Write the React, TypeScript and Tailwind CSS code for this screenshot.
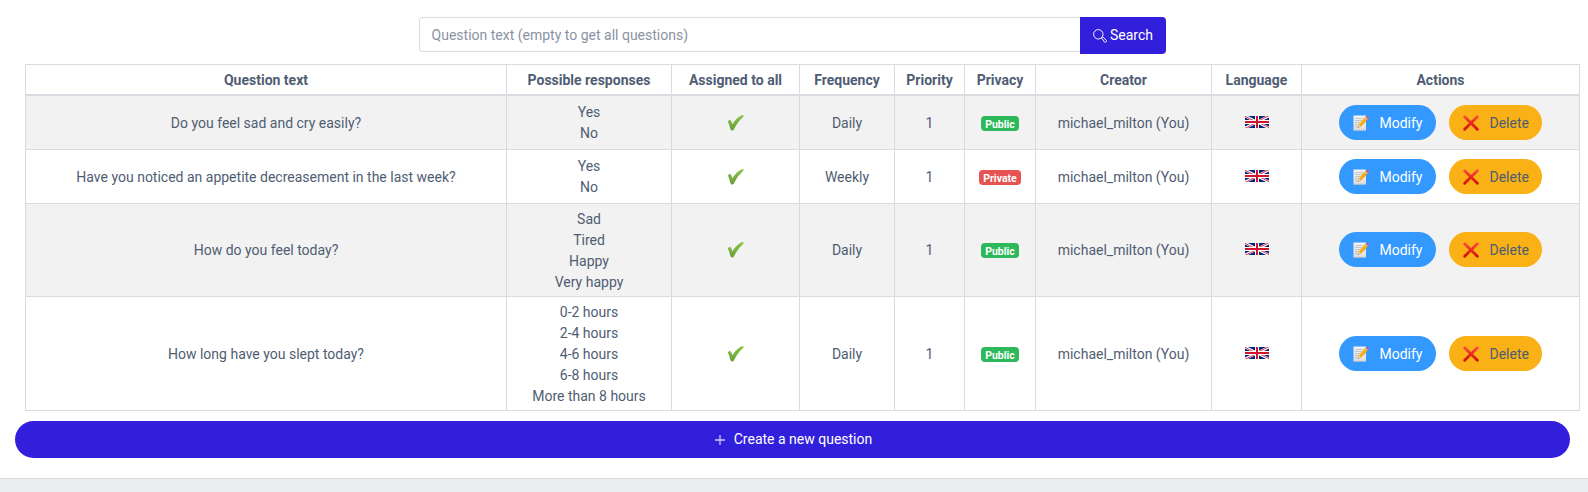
import React from "react";

type Question = {
  text: string;
  responses: string[];
  frequency: string;
  privacy: "Public" | "Private";
  height: string;
  lift: string;
};

const questions: Question[] = [
  { text: "Do you feel sad and cry easily?", responses: ["Yes", "No"], frequency: "Daily", privacy: "Public", height: "h-[55px] [&>td]:pt-[3px]", lift: "-mt-[2px]" },
  { text: "Have you noticed an appetite decreasement in the last week?", responses: ["Yes", "No"], frequency: "Weekly", privacy: "Private", height: "h-[54px] [&>td]:pt-[2px]", lift: "-mt-[2px]" },
  { text: "How do you feel today?", responses: ["Sad", "Tired", "Happy", "Very happy"], frequency: "Daily", privacy: "Public", height: "h-[93px] [&>td]:pt-[1px]", lift: "mt-0" },
  { text: "How long have you slept today?", responses: ["0-2 hours", "2-4 hours", "4-6 hours", "6-8 hours", "More than 8 hours"], frequency: "Daily", privacy: "Public", height: "h-[114px] [&>td]:pt-[2px]", lift: "mt-0" },
];

const headers = ["Question text", "Possible responses", "Assigned to all", "Frequency", "Priority", "Privacy", "Creator", "Language", "Actions"];

function Flag() {
  return (
    <svg className="mx-auto -mt-[3px] block h-3 w-6" viewBox="0 0 60 30" preserveAspectRatio="none">
      <path fill="#00247d" d="M0 0h60v30H0z" />
      <path stroke="#fff" strokeWidth="6.5" d="M0 0l60 30M60 0L0 30" />
      <path stroke="#cf142b" strokeWidth="2.2" d="M0 1l30 15M30 14l30 15M60 -1L30 14M30 16L0 31" />
      <path stroke="#fff" strokeWidth="10" d="M30 0v30M0 15h60" />
      <path stroke="#cf142b" strokeWidth="5" d="M30 0v30M0 15h60" />
    </svg>
  );
}

function CheckIcon() {
  return (
    <svg className="mx-auto -mt-[2px] block h-4 w-4" viewBox="0 0 16 16">
      <defs>
        <linearGradient id="check" x1="0" y1="0" x2="0" y2="1">
          <stop offset="0" stopColor="#8bc34a" />
          <stop offset="1" stopColor="#689f38" />
        </linearGradient>
      </defs>
      <path
        fill="url(#check)"
        d="M.2 6.100C.9 5 1.900 4.700 2.600 5.300c.8.8 1.200 2.300 1.700 4C6.600 5.600 9.500 2.600 12.900.7c.9-.5 2.400-.6 2.800-.2.3.4-.5 1.300-1.200 2C11.300 5.500 8.500 9.200 6.400 13.500c-.6 1.500-1.200 2-2.300 2-1.300 0-1.500-.7-2.100-2.700C1.400 10.700 1.100 9 .3 7.500c-.3-.5-.4-.9-.1-1.400z"
      />
    </svg>
  );
}

function CrossIcon() {
  return (
    <svg className="block h-4 w-4" viewBox="0 0 16 16">
      <defs>
        <linearGradient id="cross" x1="0" y1="0" x2="0" y2="16" gradientUnits="userSpaceOnUse">
          <stop offset="0" stopColor="#ff5047" />
          <stop offset="0.5" stopColor="#ea2a20" />
          <stop offset="1" stopColor="#cc0c0c" />
        </linearGradient>
      </defs>
      <path fill="none" stroke="url(#cross)" strokeWidth="2.800" strokeLinecap="round" d="M1.700 1.800l12.600 12.400M14.300 1.800L1.700 14.200" />
    </svg>
  );
}

function MemoIcon() {
  return (
    <svg className="block h-4 w-4" viewBox="0 0 16 16">
      <defs>
        <linearGradient id="paper" x1="0" y1="0" x2="0" y2="1">
          <stop offset="0" stopColor="#f3f3f3" />
          <stop offset="1" stopColor="#dedede" />
        </linearGradient>
      </defs>
      <path fill="url(#paper)" d="M.5.5h12.500v15H.5z" />
      <path fill="none" stroke="#b9bec2" strokeWidth="0.800" d="M2 3.500h8M2 5.500h7M2 7.500h5.500M2 9.500h4M2 11.500h3.500M.5 15.200H13" />
      <path fill="#f9b115" d="M11.800 2.200l2.500 2.300-6.700 7-2.600 1.100.8-3z" />
      <path fill="none" stroke="#d58a11" strokeWidth="0.700" d="M14 4.800l-6.500 6.700" />
      <path fill="#f1d2a0" d="M5.700 9.600l2 2-2.900 1.200z" />
      <path fill="#444" d="M5.100 11.800l.8.700-1.300.6z" />
      <path fill="#c5cdd2" d="M11.500 2.500l1-1 2.500 2.300-1 1z" />
      <path fill="#ed5565" d="M12.400 1.600c.7-.8 1.400-.8 2.200-.1l.6.600c.8.800.7 1.200-.2 2.100z" />
    </svg>
  );
}

function SearchIcon() {
  return (
    <svg className="h-[14px] w-[14px]" viewBox="0 0 14 14" fill="none" stroke="#fff" strokeWidth="1" strokeOpacity="0.95">
      <circle cx="5.300" cy="5.300" r="4.700" />
      <path d="M8.500 8.900l1.200-1.100 3.600 3.500a1 1 0 0 1 0 1.300l-.5.5a1 1 0 0 1-1.300 0z" />
    </svg>
  );
}

function PlusIcon() {
  return (
    <svg className="h-[10px] w-[10px]" viewBox="0 0 10 10" fill="none" stroke="#d0ccf7" strokeWidth="1.300">
      <path d="M5 0v10M0 5h10" />
    </svg>
  );
}

export default function App() {
  return (
    <div className="h-[492px] overflow-hidden bg-[#ebedef] font-['Roboto',sans-serif] text-[14px] leading-[21px] text-[#4f5d73]">
      <main className="h-[479px] border-b border-[#d8dbe0] bg-white pt-[17px]">
        <div className="ml-[419px] flex h-[37px] w-[747px] items-start">
          <input
            className="h-[35px] w-[661px] rounded-l-[4px] border border-r-0 border-[#d8dbe0] bg-white pr-3 pl-[11.600px] placeholder:text-[#8a93a2] placeholder:opacity-100"
            placeholder="Question text (empty to get all questions)"
          />
          <button className="flex h-[37px] flex-1 items-center justify-center gap-[3px] rounded-r-[4px] bg-[#321fdb] pb-px text-white">
            <span className="pt-[2px]"><SearchIcon /></span>Search
          </button>
        </div>
        <table className="mt-[10px] ml-[25px] w-[1555px] table-fixed border-collapse text-center">
          <colgroup>
            <col className="w-[481px]" />
            <col className="w-[165px]" />
            <col className="w-[128px]" />
            <col className="w-[95px]" />
            <col className="w-[70px]" />
            <col className="w-[71px]" />
            <col className="w-[176px]" />
            <col className="w-[90px]" />
            <col className="w-[278px]" />
          </colgroup>
          <thead>
            <tr className="h-[30px]">
              {headers.map((h) => (
                <th key={h} className="border border-b-2 border-[#d8dbe0] px-0 pt-[2px] pb-0 font-bold">{h}</th>
              ))}
            </tr>
          </thead>
          <tbody className="[&_td]:border [&_td]:border-[#d8dbe0] [&_td]:px-0 [&_td]:pb-0">
            {questions.map((q) => (
              <tr key={q.text} className={`${q.height} odd:bg-[#f2f2f2]`}>
                <td>{q.text}</td>
                <td>
                  <div className={q.lift}>{q.responses.map((r) => <div key={r}>{r}</div>)}</div>
                </td>
                <td><CheckIcon /></td>
                <td>{q.frequency}</td>
                <td>1</td>
                <td>
                  <span className={`mx-auto block h-[15px] w-fit rounded-[4px] px-[4.200px] pt-[1px] text-[10.500px] leading-[15px] font-bold text-white ${q.privacy === "Public" ? "bg-[#2eb85c]" : "bg-[#e55353]"}`}>
                    {q.privacy}
                  </span>
                </td>
                <td>michael_milton (You)</td>
                <td><Flag /></td>
                <td>
                  <div className="-mt-[2px] flex justify-center gap-[13px] pr-px">
                    <button className="flex h-[35px] w-[97px] items-center rounded-full bg-[#3399ff] pt-px pl-[14px] text-white">
                      <span className="w-[27px]"><MemoIcon /></span>Modify
                    </button>
                    <button className="flex h-[35px] w-[93px] items-center rounded-full bg-[#f9b115] pt-px pl-[14px]">
                      <span className="w-[27px]"><CrossIcon /></span>Delete
                    </button>
                  </div>
                </td>
              </tr>
            ))}
          </tbody>
        </table>
        <button className="mt-[10px] ml-[15px] flex h-[37px] w-[1555px] items-center justify-center gap-[9px] rounded-full bg-[#321fdb] pb-px pl-[2px] text-white">
          <span className="pt-[2px]"><PlusIcon /></span>Create a new question
        </button>
      </main>
    </div>
  );
}
